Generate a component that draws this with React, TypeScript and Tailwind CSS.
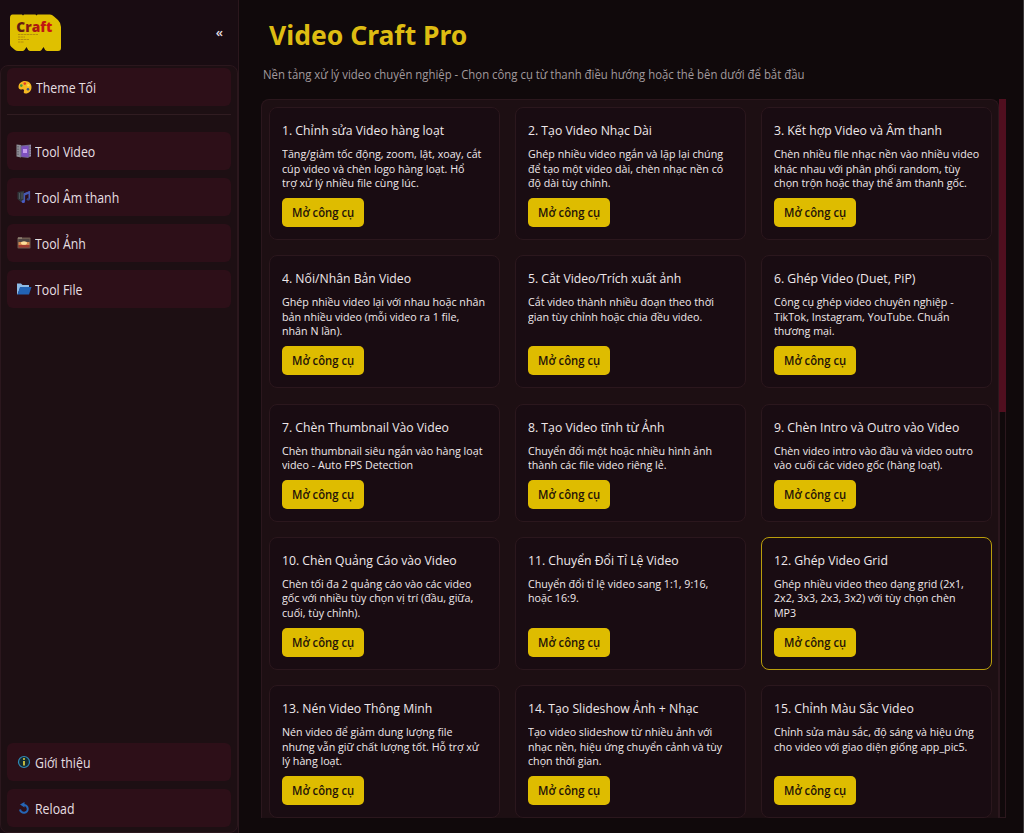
import type { ReactNode } from 'react';

const tools = [
  { title: '1. Chỉnh sửa Video hàng loạt', lines: ['Tăng/giảm tốc động, zoom, lật, xoay, cắt', 'cúp video và chèn logo hàng loạt. Hổ', 'trợ xử lý nhiều file cùng lúc.'] },
  { title: '2. Tạo Video Nhạc Dài', lines: ['Ghép nhiều video ngắn và lặp lại chúng', 'để tạo một video dài, chèn nhạc nền có', 'độ dài tùy chỉnh.'] },
  { title: '3. Kết hợp Video và Âm thanh', lines: ['Chèn nhiều file nhạc nền vào nhiều video', 'khác nhau với phân phối random, tùy', 'chọn trộn hoặc thay thế âm thanh gốc.'] },
  { title: '4. Nối/Nhân Bản Video', lines: ['Ghép nhiều video lại với nhau hoặc nhân', 'bản nhiều video (mỗi video ra 1 file,', 'nhân N lần).'] },
  { title: '5. Cắt Video/Trích xuất ảnh', lines: ['Cắt video thành nhiều đoạn theo thời', 'gian tùy chỉnh hoặc chia đều video.'] },
  { title: '6. Ghép Video (Duet, PiP)', lines: ['Công cụ ghép video chuyên nghiệp -', 'TikTok, Instagram, YouTube. Chuẩn', 'thương mại.'] },
  { title: '7. Chèn Thumbnail Vào Video', lines: ['Chèn thumbnail siêu ngắn vào hàng loạt', 'video - Auto FPS Detection'] },
  { title: '8. Tạo Video tĩnh từ Ảnh', lines: ['Chuyển đổi một hoặc nhiều hình ảnh', 'thành các file video riêng lẻ.'] },
  { title: '9. Chèn Intro và Outro vào Video', lines: ['Chèn video intro vào đầu và video outro', 'vào cuối các video gốc (hàng loạt).'] },
  { title: '10. Chèn Quảng Cáo vào Video', lines: ['Chèn tối đa 2 quảng cáo vào các video', 'gốc với nhiều tùy chọn vị trí (đầu, giữa,', 'cuối, tùy chỉnh).'] },
  { title: '11. Chuyển Đổi Tỉ Lệ Video', lines: ['Chuyển đổi tỉ lệ video sang 1:1, 9:16,', 'hoặc 16:9.'] },
  { title: '12. Ghép Video Grid', lines: ['Ghép nhiều video theo dạng grid (2x1,', '2x2, 3x3, 2x3, 3x2) với tùy chọn chèn', 'MP3'], active: true },
  { title: '13. Nén Video Thông Minh', lines: ['Nén video để giảm dung lượng file', 'nhưng vẫn giữ chất lượng tốt. Hỗ trợ xử', 'lý hàng loạt.'] },
  { title: '14. Tạo Slideshow Ảnh + Nhạc', lines: ['Tạo video slideshow từ nhiều ảnh với', 'nhạc nền, hiệu ứng chuyển cảnh và tùy', 'chọn thời gian.'] },
  { title: '15. Chỉnh Màu Sắc Video', lines: ['Chỉnh sửa màu sắc, độ sáng và hiệu ứng', 'cho video với giao diện giống app_pic5.'] },
];

function Logo() {
  return (
    <svg width="52" height="38" viewBox="0 0 52 38">
      <defs>
        <linearGradient id="craft" x1="0" x2="1">
          <stop offset="0.1" stopColor="#5c1a12" />
          <stop offset="0.6" stopColor="#b51a10" />
          <stop offset="1" stopColor="#cf1414" />
        </linearGradient>
      </defs>
      <path d="M2.500 .5H12l1 1 1-1h11.500l1 1 1-1H40q2 0 4 2l4 3.500q3 3 3 7v21q0 3-3 3H37.500q-1.500 0-2.300-1L33.500 33l-2 3q-.7 1-2 1h-9q-1.500 0-2.300-1l-1.700-3-2 3q-.7 1-2 1H8q-2 0-3-1L1.500 33Q0 32 0 30V4q0-3.500 2.500-3.500z" fill="#dfc000" />
      <text x="6.300" y="17.500" fill="url(#craft)" fontFamily="Open Sans, sans-serif" fontWeight="800" fontSize="13.500" textLength="36" lengthAdjust="spacingAndGlyphs">Craft</text>
      <g stroke="#a67a10" strokeWidth="0.9" opacity="0.8">
        <path d="M8 20.500h20M8 23h7M8 25.500h11M8 28h6" strokeDasharray="2.500 0.500" />
      </g>
    </svg>
  );
}

function NavItem({ icon, label }: { icon: ReactNode; label: string }) {
  return (
    <button className="flex h-[38px] w-full shrink-0 items-center gap-[3px] rounded-md bg-[#2d0f18] pl-[9px] text-left text-[14px] text-[#e6dfe1]">
      {icon}
      <span className="origin-left scale-x-[0.88] whitespace-nowrap">{label}</span>
    </button>
  );
}

const paletteIcon = (
  <svg width="17" height="16" viewBox="0 0 17 16">
    <path d="M9 2c4 0 6.500 2.800 6.500 6 0 4-2.500 6.500-6 6.500-2 0-2-1.500-1.500-2.500.4-1-.5-2-1.700-1.700C4 11 2.500 10 2.500 8 2.500 4.500 5.500 2 9 2z" fill="#f5b921" />
    <circle cx="5.300" cy="6.600" r="1.300" fill="#3c9b42" />
    <circle cx="8.800" cy="4.600" r="1.300" fill="#e23b2a" />
    <circle cx="12.300" cy="6.200" r="1.200" fill="#f9e04b" />
    <circle cx="12" cy="10.300" r="1.300" fill="#3a5a87" />
  </svg>
);

const videoIcon = (
  <svg width="16" height="16" viewBox="0 0 16 16">
    <path d="M.5 1.500 5 2v12.500l-4.500-1z" fill="#8f9097" />
    <path d="M2 3v10" stroke="#55525c" strokeDasharray="1.500 1" />
    <path d="M4.500 2.500 15 1.500V13l-3 2-7.500-1z" fill="#70678a" />
    <path d="M5.500 3.500l7-.5v11l-7-.5z" fill="#7d50c0" />
    <rect x="7" y="6" width="4" height="4" fill="#c59aee" />
    <path d="M14.200 2v11.500" stroke="#aaa6b4" strokeDasharray="1.500 1" />
  </svg>
);

const soundIcon = (
  <svg width="16" height="16" viewBox="0 0 16 16">
    <path d="M1.500 3 8 2v10l-3 1-3.500-3z" fill="#30363a" />
    <path d="M3.500 4v6M6 3.500V10" stroke="#4f585c" />
    <path d="M8.300 12V5l5-2v7" fill="none" stroke="#4659b0" strokeWidth="1.600" />
    <path d="M8.300 5.500l5-2" stroke="#4659b0" strokeWidth="2" />
    <ellipse cx="7.300" cy="12.500" rx="1.700" ry="1.500" fill="#4a5cc4" />
    <ellipse cx="12.300" cy="10.300" rx="1.600" ry="1.400" fill="#34427f" />
  </svg>
);

const imageIcon = (
  <svg width="16" height="16" viewBox="0 0 16 16">
    <rect x="1.500" y="2.500" width="13" height="11" rx="0.800" fill="#6c5a4e" />
    <path d="M2.500 4h11v4h-11z" fill="#4e4442" />
    <path d="M2.500 7h11v3h-11z" fill="#d38b50" />
    <path d="M2.500 10h11v2.500h-11z" fill="#a33b31" />
    <ellipse cx="8" cy="8" rx="3" ry="1.800" fill="#ffdf9b" />
    <path d="M2 3h4" stroke="#aaa08f" />
  </svg>
);

const folderIcon = (
  <svg width="16" height="16" viewBox="0 0 16 16">
    <path d="M1 2.500h4L6.500 4H13v3H4l-2.500 6.500H1z" fill="#8dbbe6" />
    <path d="M4 6h11.500l-2.500 7.500H1.500z" fill="#2263b4" />
  </svg>
);

const infoIcon = (
  <svg width="16" height="16" viewBox="0 0 16 16">
    <circle cx="8" cy="8" r="5.500" fill="#122b33" stroke="#3189b5" strokeWidth="1.200" />
    <path d="M8 7v4.500" stroke="#d6c740" strokeWidth="1.800" />
    <circle cx="8" cy="5" r="1.050" fill="#d6c740" />
  </svg>
);

const reloadIcon = (
  <svg width="16" height="16" viewBox="0 0 16 16">
    <path d="M7.500 5A3.900 3.900 0 1 1 4 9.500" fill="none" stroke="#2565b5" strokeWidth="2" />
    <path d="M4 4.600 8.500 2v5.600z" fill="#2565b5" />
  </svg>
);

function ToolCard({ title, lines, active }: { title: string; lines: string[]; active?: boolean }) {
  return (
    <div className={`flex flex-col items-start rounded-lg border bg-[#190c12] px-[12px] pt-[12px] pb-[12px] ${active ? 'border-[#b99d0c]' : 'border-[#2b171d]'}`}>
      <h2 className="h-5 origin-left scale-x-[0.905] text-[13.5px] leading-5 whitespace-nowrap text-[#efe8ea]">{title}</h2>
      <p className="mt-[7px] mb-[7px] origin-left scale-x-[0.93] text-[11.5px] leading-[14.5px] whitespace-nowrap text-[#f0e9eb]">
        {lines.map((line) => (
          <span key={line} className="block">{line}</span>
        ))}
      </p>
      <button className="mt-auto h-[29px] w-[82px] rounded-[5px] bg-[#debc00] pt-px text-[12px] font-semibold text-[#241208]">
        <span className="inline-block scale-x-[0.94]">Mở công cụ</span>
      </button>
    </div>
  );
}

export default function App() {
  return (
    <div className="flex h-[833px] w-[1024px] overflow-hidden border-r border-[#3b3839] bg-[#10090b] font-['Open_Sans','Noto_Sans',sans-serif]">
      <aside className="flex w-[239px] shrink-0 flex-col border-r border-[#2b171d] bg-[#190c12]">
        <div className="flex h-[65px] items-center justify-between pr-[15px] pl-[10px]">
          <Logo />
          <span className="text-[13px] leading-none font-semibold text-[#e6dfe1]">«</span>
        </div>
        <nav className="flex flex-1 flex-col rounded-lg border border-[#2b171d] bg-[#1d0f13] px-1.5 pt-[2px] pb-[5px]">
          <NavItem icon={paletteIcon} label="Theme Tối" />
          <hr className="mt-[8px] mb-[17px] border-[#301c21]" />
          <div className="flex flex-col gap-2">
            <NavItem icon={videoIcon} label="Tool Video" />
            <NavItem icon={soundIcon} label="Tool Âm thanh" />
            <NavItem icon={imageIcon} label="Tool Ảnh" />
            <NavItem icon={folderIcon} label="Tool File" />
          </div>
          <div className="mt-auto flex flex-col gap-2">
            <NavItem icon={infoIcon} label="Giới thiệu" />
            <NavItem icon={reloadIcon} label="Reload" />
          </div>
        </nav>
      </aside>

      <main className="flex w-[784px] flex-col items-start pl-[22px]">
        <h1 className="mt-[17px] h-9 pl-[8px] font-['Noto_Sans',sans-serif] text-[26.5px] leading-9 font-bold whitespace-nowrap text-[#debc12]">Video Craft Pro</h1>
        <p className="mt-[12px] ml-[2px] h-5 origin-left scale-x-[0.947] text-[12px] leading-5 whitespace-nowrap text-[#a29a9d]">
          Nền tảng xử lý video chuyên nghiệp - Chọn công cụ từ thanh điều hướng hoặc thẻ bên dưới để bắt đầu
        </p>
        <div className="mt-[14px] flex h-[719px] w-[745px]">
          <section className="h-full w-[738px] overflow-hidden rounded-t-lg border border-b-0 border-[#2b171d] bg-[#1d0f13] px-[7px] pt-[7px]">
            <div className="grid grid-cols-[231px_230.5px_231px] grid-rows-[133px_133px_118px_133px_133px] gap-x-[15.2px] gap-y-[15.25px]">
              {tools.map((tool) => (
                <ToolCard key={tool.title} {...tool} />
              ))}
            </div>
          </section>
          <div className="h-full w-[7px] border-x border-b border-[#2b171d] bg-[#10090b]">
            <div className="-mx-px h-[313px] bg-[#500f1f]" />
          </div>
        </div>
      </main>
    </div>
  );
}
